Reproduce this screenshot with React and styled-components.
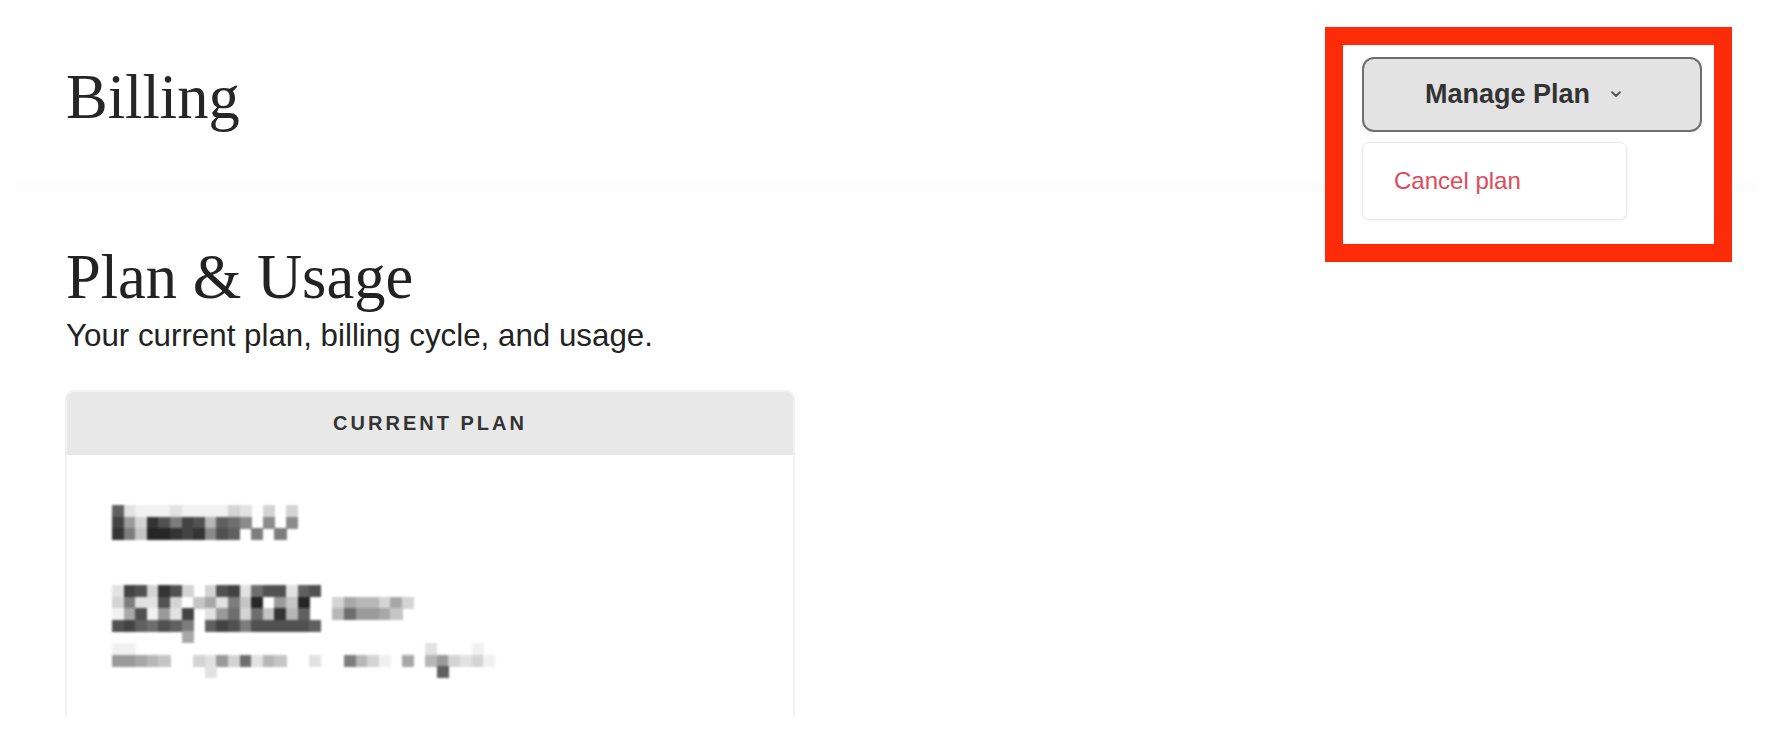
import styled, { createGlobalStyle } from "styled-components";

const GlobalStyle = createGlobalStyle`
  html, body {
    margin: 0;
    padding: 0;
    background: #ffffff;
  }
  body {
    font-family: "Liberation Sans", Arial, sans-serif;
    color: #222222;
  }
  * {
    box-sizing: border-box;
  }
`;

// blurred (pixelated) plan details, one hex digit per cell: 0 = dark, f = white
const planName = [
  "4deeedeeeecdfcfcf",
  "28c13623a457f7f7f",
  "16b00121734f6f6ff",
];

const planPrice = [
  "d23c13cfc32d533d43fffffffff",
  "c6dd3cfb9d6b0f8b0ffc9aac9cf",
  "e93e8d2fd85c5b1a4ffa5889bff",
  "3245346f4236333334fffffffff",
  "ffffff9ffffffffffffffffffff",
];

const planNote = [
  "eefffffffffffffffffffffffffdfffeff",
  "889abffcd8c5dabffdff6acef9fa8cdcef",
  "ffffffffdfffffffffffffffffff4fffff",
];

const shade = (ch) => {
  const v = parseInt(ch, 16);
  const g = Math.round(0x26 + (v * (0xff - 0x26)) / 15);
  return `rgb(${g},${g},${g})`;
};

function Mosaic({ rows, cell = 11.6 }) {
  const cols = rows[0].length;
  return (
    <MosaicSvg width={cols * cell} height={rows.length * cell}>
      {rows.map((row, r) =>
        row.split("").map((ch, c) =>
          ch === "f" ? null : (
            <rect
              key={`${r}-${c}`}
              x={c * cell}
              y={r * cell}
              width={cell + 0.5}
              height={cell + 0.5}
              fill={shade(ch)}
            />
          )
        )
      )}
    </MosaicSvg>
  );
}

function Chevron() {
  return (
    <svg width="10" height="7" viewBox="0 0 10 7">
      <polyline
        points="1.2,1.2 5,5 8.8,1.2"
        fill="none"
        stroke="#555"
        strokeWidth="2"
        strokeLinecap="round"
        strokeLinejoin="round"
      />
    </svg>
  );
}

export default function App() {
  return (
    <>
      <GlobalStyle />
      <Page>
        <Header>
          <PageTitle>Billing</PageTitle>
          <Highlight>
            <ManageButton>
              <span>Manage Plan</span>
              <Chevron />
            </ManageButton>
            <Menu>
              <MenuItem>Cancel plan</MenuItem>
            </Menu>
          </Highlight>
        </Header>

        <Section>
          <SectionTitle>Plan &amp; Usage</SectionTitle>
          <Subtitle>Your current plan, billing cycle, and usage.</Subtitle>

          <Card>
            <CardHeader>Current Plan</CardHeader>
            <CardBody>
              <Mosaic rows={planName} />
              <PriceRow>
                <Mosaic rows={planPrice} />
              </PriceRow>
              <Mosaic rows={planNote} />
            </CardBody>
          </Card>
        </Section>
      </Page>
    </>
  );
}

const Page = styled.div`
  width: 100%;
  min-height: 750px;
  background: #ffffff;
`;

const Header = styled.header`
  position: relative;
  height: 192px;
  margin: 0 16px;
  padding: 66px 0 0 50px;
  border-bottom: 9px solid #fcfcfc;
`;

const PageTitle = styled.h1`
  margin: 0;
  font-family: "Liberation Serif", "Times New Roman", serif;
  font-size: 62.5px;
  line-height: 62px;
  font-weight: 400;
  color: #262626;
`;

const Highlight = styled.div`
  position: absolute;
  top: 27px;
  right: 26px;
  width: 407px;
  height: 235px;
  padding: 12px 12px 0 19px;
  border: 18px solid #fd2b08;
  background: #ffffff;
  z-index: 2;
`;

const ManageButton = styled.button`
  display: flex;
  align-items: center;
  justify-content: center;
  gap: 21px;
  width: 340px;
  height: 75px;
  padding: 0 18px 0 0;
  border: 2px solid #6e6e6e;
  border-radius: 12px;
  background: #e3e3e3;
  font-family: "Liberation Sans", Arial, sans-serif;
  font-size: 27px;
  font-weight: 700;
  color: #333333;
  cursor: pointer;
`;

const Menu = styled.div`
  display: flex;
  align-items: center;
  width: 265px;
  height: 78px;
  margin-top: 10px;
  padding-left: 31px;
  border: 1px solid #e9e9e9;
  border-radius: 7px;
  background: #ffffff;
  box-shadow: 0 1px 3px rgba(0, 0, 0, 0.06);
`;

const MenuItem = styled.span`
  font-size: 24px;
  color: #e04a5c;
  cursor: pointer;
`;

const Section = styled.section`
  padding: 54px 0 0 66px;
`;

const SectionTitle = styled.h2`
  margin: 0;
  font-family: "Liberation Serif", "Times New Roman", serif;
  font-size: 62.5px;
  line-height: 62px;
  font-weight: 400;
  color: #222222;
`;

const Subtitle = styled.p`
  margin: 9px 0 0;
  font-size: 31.3px;
  line-height: 37px;
  color: #222222;
`;

const Card = styled.div`
  width: 730px;
  height: 326px;
  margin-top: 36px;
  margin-left: -1px;
  border: 2px solid #f1f1f1;
  border-bottom: none;
  border-radius: 9px 9px 0 0;
  overflow: hidden;
`;

const CardHeader = styled.div`
  display: flex;
  align-items: center;
  justify-content: center;
  height: 63px;
  background: #e8e8e8;
  font-size: 20px;
  font-weight: 700;
  letter-spacing: 3px;
  text-transform: uppercase;
  color: #333333;
`;

const CardBody = styled.div`
  display: flex;
  flex-direction: column;
  align-items: flex-start;
  padding: 50px 0 0 45px;
`;

const PriceRow = styled.div`
  margin-top: 45px;
`;

const MosaicSvg = styled.svg`
  display: block;
  shape-rendering: crispEdges;
  filter: blur(0.9px);
`;
